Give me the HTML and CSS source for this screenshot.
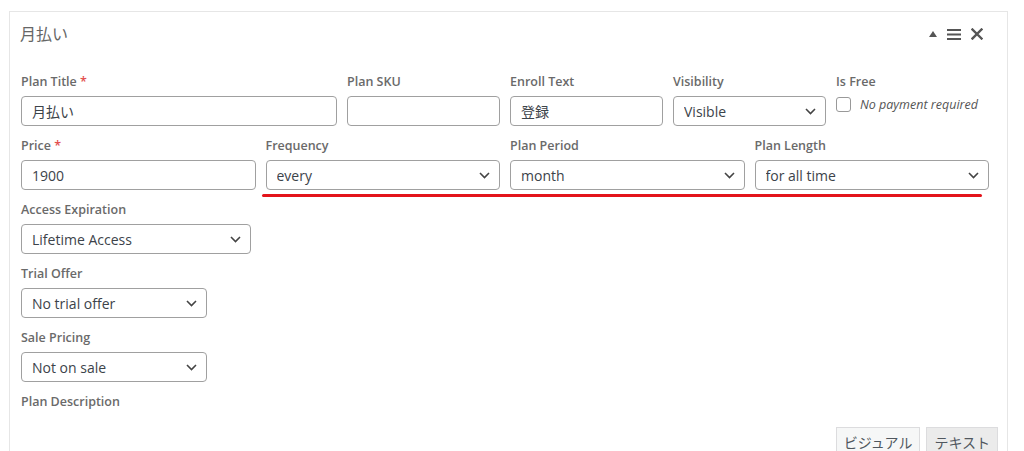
FILE: index.html
```html
<!DOCTYPE html>
<html lang="ja">

<head>
  <meta charset="UTF-8">
  <title>Plan</title>
  <link rel="stylesheet" href="styles.css">
</head>

<body>

  <div class="panel">
    <!-- header -->
    <div class="panel-head">
      <h2>月払い</h2>
      <div class="head-icons">
        <svg width="8" height="6" viewBox="0 0 8 6"><path d="M0 6 L4 0 L8 6 Z" fill="#555"/></svg>
        <svg width="14" height="11" viewBox="0 0 14 11"><rect y="0" width="14" height="2" fill="#555"/><rect y="4.5" width="14" height="2" fill="#555"/><rect y="9" width="14" height="2" fill="#555"/></svg>
        <svg width="12" height="12" viewBox="0 0 12 12"><path d="M1.5 1.5 L10.5 10.5 M10.5 1.5 L1.5 10.5" stroke="#555" stroke-width="2.4" stroke-linecap="square"/></svg>
      </div>
    </div>

    <div class="panel-body">
      <!-- row 1 -->
      <div class="row six">
        <div class="field span2">
          <label>Plan Title <span class="req">*</span></label>
          <input type="text" value="月払い">
        </div>
        <div class="field">
          <label>Plan SKU</label>
          <input type="text" value="">
        </div>
        <div class="field">
          <label>Enroll Text</label>
          <input type="text" value="登録">
        </div>
        <div class="field">
          <label>Visibility</label>
          <select><option>Visible</option></select>
        </div>
        <div class="field">
          <label>Is Free</label>
          <div class="check">
            <span class="box"></span>
            <em>No payment required</em>
          </div>
        </div>
      </div>

      <!-- row 2 -->
      <div class="row four marked">
        <div class="field">
          <label>Price <span class="req">*</span></label>
          <input type="text" value="1900">
        </div>
        <div class="field">
          <label>Frequency</label>
          <select><option>every</option></select>
        </div>
        <div class="field">
          <label>Plan Period</label>
          <select><option>month</option></select>
        </div>
        <div class="field">
          <label>Plan Length</label>
          <select><option>for all time</option></select>
        </div>
      </div>

      <div class="field w-access">
        <label>Access Expiration</label>
        <select><option>Lifetime Access</option></select>
      </div>

      <div class="field w-small">
        <label>Trial Offer</label>
        <select><option>No trial offer</option></select>
      </div>

      <div class="field w-small">
        <label>Sale Pricing</label>
        <select><option>Not on sale</option></select>
      </div>

      <div class="field desc">
        <label>Plan Description</label>
      </div>

      <div class="editor">
        <div class="tabs">
          <span class="tab active">ビジュアル</span>
          <span class="tab">テキスト</span>
        </div>
      </div>
    </div>
  </div>

</body>

</html>
```

FILE: styles.css
```css
body {
  margin: 0;
  background: #fff;
  font-family: "Open Sans", "Noto Sans CJK JP", sans-serif;
  color: #333;
  overflow: hidden;
}

.panel {
  margin: 11px 16px 0 9px;
  border: 1px solid #e6e6e6;
  border-bottom: none;
  height: 460px;
}

.panel-head {
  display: flex;
  justify-content: space-between;
  align-items: center;
  padding: 10px 24px 0 10px;
  height: 24px;
}

.panel-head h2 {
  margin: 0;
  font-size: 16px;
  font-weight: normal;
  color: #666;
  line-height: 24px;
}

.head-icons {
  display: flex;
  align-items: center;
  gap: 10px;
}

.panel-body {
  padding: 27px 18px 0 11px;
}

.row {
  display: grid;
  column-gap: 10px;
}

.six {
  grid-template-columns: repeat(6, 1fr);
}

.four {
  grid-template-columns: repeat(4, 1fr);
}

.span2 {
  grid-column: span 2;
}

.marked {
  position: relative;
}

.marked::after {
  content: "";
  position: absolute;
  left: 241px;
  right: 7px;
  top: 57px;
  height: 3px;
  border-radius: 2px;
  background: #e3141b;
}

.field {
  display: flex;
  flex-direction: column;
  margin-bottom: 11px;
}

.field.desc {
  margin-bottom: 0;
}

label {
  font-size: 12.5px;
  font-weight: 600;
  color: #6a6a6a;
  line-height: 18px;
  margin-bottom: 5px;
}

.req {
  color: #e35050;
}

input,
select {
  box-sizing: border-box;
  height: 30px;
  width: 100%;
  border: 1px solid #a0a0a0;
  border-radius: 4px;
  padding: 0 10px;
  font-family: "Open Sans", "Noto Sans CJK JP", sans-serif;
  font-size: 14px;
  color: #3c434a;
  background: #fff;
  margin: 0;
}

select {
  appearance: none;
  -webkit-appearance: none;
  background-image: url("data:image/svg+xml;utf8,<svg xmlns='http://www.w3.org/2000/svg' width='11' height='7' viewBox='0 0 11 7'><path d='M1 1 L5.5 5.5 L10 1' fill='none' stroke='%23444' stroke-width='1.6'/></svg>");
  background-repeat: no-repeat;
  background-position: right 9px center;
}

.w-access {
  width: 230px;
}

.w-small {
  width: 186px;
}

.check {
  display: flex;
  align-items: center;
  gap: 9px;
  height: 20px;
  margin-top: -2px;
}

.box {
  box-sizing: border-box;
  width: 15px;
  height: 15px;
  border: 1px solid #999;
  border-radius: 3px;
}

.check em {
  font-size: 12.5px;
  color: #555;
}

.editor {
  margin: 11px -9px 0 -1px;
  border-bottom: 1px solid #dcdcde;
}

.tabs {
  display: flex;
  justify-content: flex-end;
  gap: 6px;
}

.tab {
  font-family: "Noto Sans CJK JP", sans-serif;
  font-size: 14px;
  color: #50575e;
  background: #ebebeb;
  border: 1px solid #dcdcde;
  border-bottom: none;
  padding: 4px 7px 3px;
  line-height: 20px;
  margin-bottom: -1px;
}

.tab.active {
  background: #f6f7f7;
}
```
